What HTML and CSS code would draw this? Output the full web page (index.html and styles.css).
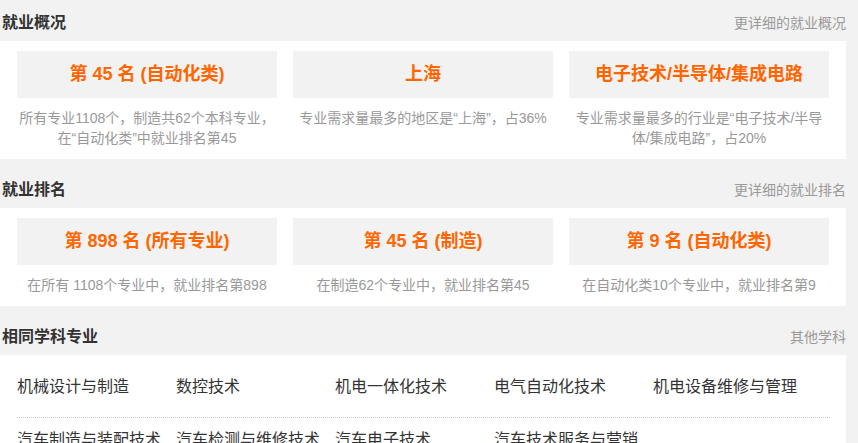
FILE: index.html
```html
<!DOCTYPE html>
<html lang="zh-CN">
<head>
  <meta charset="UTF-8" />
  <meta name="viewport" content="width=device-width, initial-scale=1" />
  <title>就业情况</title>
  <link rel="stylesheet" href="styles.css">
</head>
<body>
  <div class="page">

    <div class="section">
      <div class="section-head">
        <h2>就业概况</h2>
        <a class="more" href="#">更详细的就业概况</a>
      </div>
      <div class="panel stats">
        <div class="stat">
          <div class="stat-value">第 45 名 (自动化类)</div>
          <p class="stat-desc">所有专业1108个，制造共62个本科专业，在“自动化类”中就业排名第45</p>
        </div>
        <div class="stat">
          <div class="stat-value">上海</div>
          <p class="stat-desc">专业需求量最多的地区是“上海”，占36%</p>
        </div>
        <div class="stat">
          <div class="stat-value">电子技术/半导体/集成电路</div>
          <p class="stat-desc">专业需求量最多的行业是“电子技术/半导体/集成电路”，占20%</p>
        </div>
      </div>
    </div>

    <div class="section">
      <div class="section-head">
        <h2>就业排名</h2>
        <a class="more" href="#">更详细的就业排名</a>
      </div>
      <div class="panel stats">
        <div class="stat">
          <div class="stat-value">第 898 名 (所有专业)</div>
          <p class="stat-desc">在所有 1108个专业中，就业排名第898</p>
        </div>
        <div class="stat">
          <div class="stat-value">第 45 名 (制造)</div>
          <p class="stat-desc">在制造62个专业中，就业排名第45</p>
        </div>
        <div class="stat">
          <div class="stat-value">第 9 名 (自动化类)</div>
          <p class="stat-desc">在自动化类10个专业中，就业排名第9</p>
        </div>
      </div>
    </div>

    <div class="section">
      <div class="section-head">
        <h2>相同学科专业</h2>
        <a class="more" href="#">其他学科</a>
      </div>
      <div class="panel majors">
        <ul class="major-row">
          <li><a href="#">机械设计与制造</a></li>
          <li><a href="#">数控技术</a></li>
          <li><a href="#">机电一体化技术</a></li>
          <li><a href="#">电气自动化技术</a></li>
          <li><a href="#">机电设备维修与管理</a></li>
        </ul>
        <ul class="major-row">
          <li><a href="#">汽车制造与装配技术</a></li>
          <li><a href="#">汽车检测与维修技术</a></li>
          <li><a href="#">汽车电子技术</a></li>
          <li><a href="#">汽车技术服务与营销</a></li>
        </ul>
      </div>
    </div>

  </div>
</body>
</html>
```

FILE: styles.css
```css
body {
  margin: 0;
  background: #f2f2f2;
  font-family: 'Liberation Sans', 'Noto Sans CJK SC', sans-serif;
  color: #333;
}

.page {
  width: 846px;
}

.section {
  margin-bottom: 8px;
}

.section-head {
  display: flex;
  justify-content: space-between;
  align-items: baseline;
  padding: 12px 0 7px 2px;
}

.section-head h2 {
  margin: 0;
  font-size: 16px;
  line-height: 22px;
  font-weight: bold;
  color: #333;
}

.more {
  font-size: 14px;
  color: #999;
  text-decoration: none;
}

.panel {
  background: #fff;
}

.stats {
  display: grid;
  grid-template-columns: repeat(3, 260px);
  column-gap: 16px;
  padding: 10px 16px 11px 17px;
}

.stat-value {
  background: #f2f2f2;
  height: 47px;
  line-height: 47px;
  text-align: center;
  font-size: 18px;
  font-weight: bold;
  color: #ff6600;
}

.stat-desc {
  margin: 10px 0 0;
  font-size: 14px;
  line-height: 20px;
  text-align: center;
  color: #999;
}

.majors {
  padding: 10px 16px 0 17px;
}

.major-row {
  display: grid;
  grid-template-columns: repeat(5, 159px);
  margin: 0;
  padding: 10px 0 18px;
  list-style: none;
  border-bottom: 1px dotted #ccc;
}

.major-row li {
  font-size: 16px;
  line-height: 24px;
  white-space: nowrap;
}

.major-row a {
  color: #333;
  text-decoration: none;
}
```
